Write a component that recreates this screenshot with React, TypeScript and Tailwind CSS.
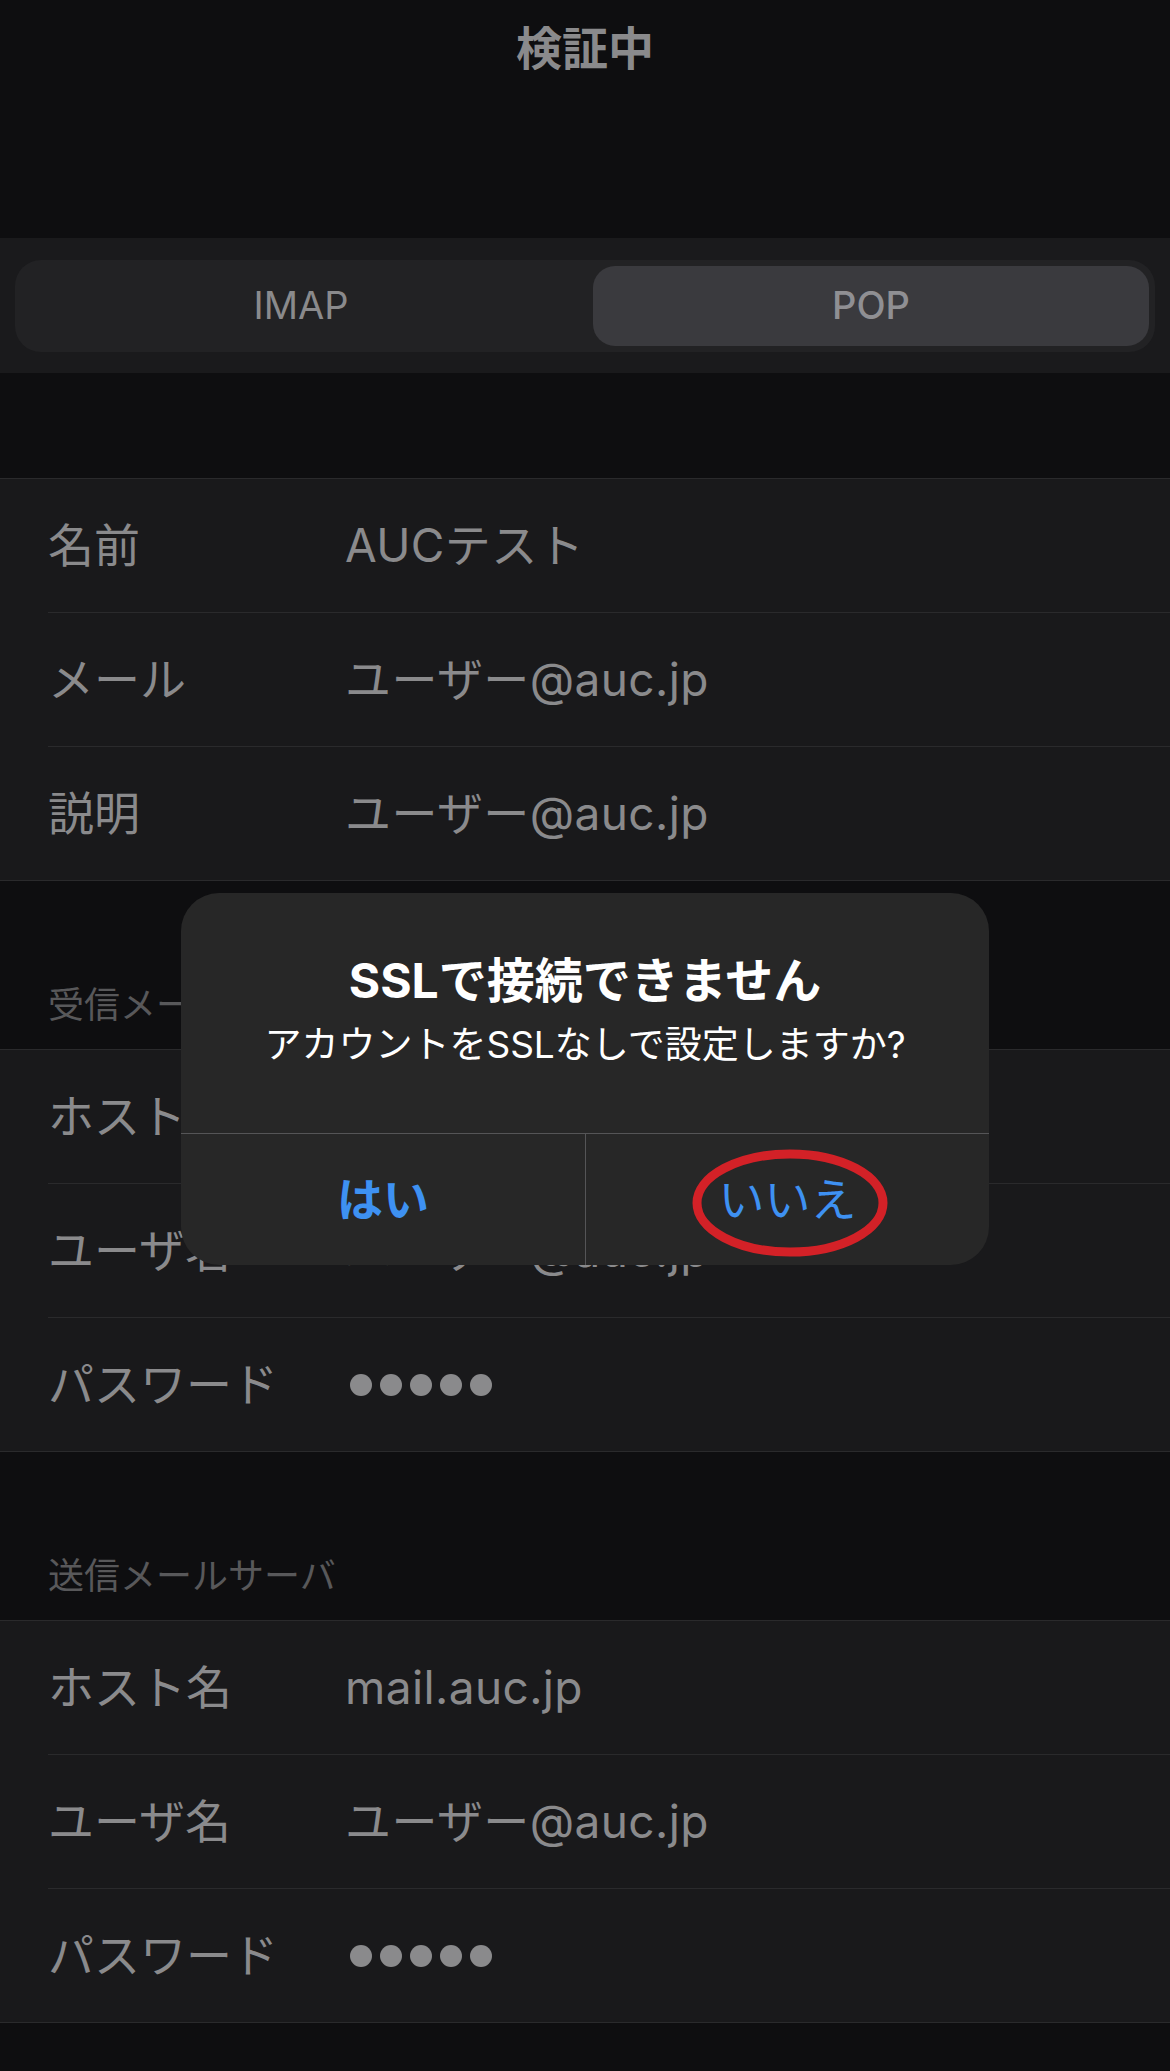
import React from "react";

type Field = { label: string; value: string };

const account: Field[] = [
  { label: "名前", value: "AUCテスト" },
  { label: "メール", value: "ユーザー@auc.jp" },
  { label: "説明", value: "ユーザー@auc.jp" },
];

const incoming: Field[] = [
  { label: "ホスト名", value: "mail.auc.jp" },
  { label: "ユーザ名", value: "ユーザー@auc.jp" },
  { label: "パスワード", value: "*****" },
];

const outgoing: Field[] = [
  { label: "ホスト名", value: "mail.auc.jp" },
  { label: "ユーザ名", value: "ユーザー@auc.jp" },
  { label: "パスワード", value: "*****" },
];

const Dots = () => (
  <div className="flex gap-[8px] ml-[5px]">
    {[0, 1, 2, 3, 4].map((i) => (
      <span key={i} className="block w-[22px] h-[22px] rounded-full bg-[#8a8a8c]" />
    ))}
  </div>
);

const Group = ({ fields }: { fields: Field[] }) => (
  <div className="bg-[#19191b] border-y border-[#2a2a2c]">
    {fields.map((f, i) => (
      <div key={f.label + i}>
        {i > 0 && <div className="ml-[48px] h-px bg-[#2a2a2c]" />}
        <div className="h-[133px] flex items-center pl-[48px] text-[46px] text-[#8a8a8c]">
          <div className="w-[297px] shrink-0">{f.label}</div>
          {f.value === "*****" ? <Dots /> : <div className="tracking-[0.4px]">{f.value}</div>}
        </div>
      </div>
    ))}
  </div>
);

const SectionHeader = ({ title }: { title?: string }) => (
  <div className="h-[168px] flex items-end pl-[48px] pb-[22px] text-[36px] leading-[44px] text-[#58585a]">
    {title}
  </div>
);

export default function App() {
  return (
    <div className="relative w-[1170px] h-[2071px] overflow-hidden bg-[#0e0e10] font-['Inter','Noto_Sans_CJK_JP',sans-serif]">
      {/* nav bar */}
      <div className="h-[238px] flex justify-center pt-[20px]">
        <h1 className="text-[46px] leading-[56px] font-bold text-[#8a8a8c]">検証中</h1>
      </div>

      {/* segmented control */}
      <div className="h-[135px] bg-[#1a1a1c] flex items-center px-[15px]">
        <div className="w-full h-[92px] rounded-[26px] bg-[#222224] p-[6px] grid grid-cols-[1fr_556px]">
          <div className="flex items-center justify-center pr-[12px] text-[38px] text-[#8a8a8c]">IMAP</div>
          <div className="flex items-center justify-center rounded-[22px] bg-[#3a3a3e] text-[38px] font-medium text-[#8f8f93]">
            POP
          </div>
        </div>
      </div>

      <div className="h-[105px]" />
      <Group fields={account} />
      <SectionHeader title="受信メールサーバ" />
      <Group fields={incoming} />
      <SectionHeader title="送信メールサーバ" />
      <Group fields={outgoing} />

      {/* alert */}
      <div className="absolute left-[181px] top-[893px] w-[808px] h-[372px] rounded-[38px] bg-[#272727] flex flex-col">
        <div className="h-[240px] flex flex-col items-center pt-[56px]">
          <div className="text-[48px] leading-[64px] font-bold text-white">SSLで接続できません</div>
          <div className="mt-[8px] text-[37px] leading-[48px] text-white">アカウントをSSLなしで設定しますか?</div>
        </div>
        <div className="h-px bg-[#555557]" />
        <div className="flex-1 grid grid-cols-2">
          <button className="flex items-center justify-center text-[46px] font-bold text-[#3e91f2]">はい</button>
          <button className="flex items-center justify-center border-l border-[#555557] text-[46px] text-[#3e91f2]">
            いいえ
          </button>
        </div>
      </div>

      {/* red annotation circle */}
      <svg className="absolute left-[690px] top-[1147px]" width="200" height="112" viewBox="0 0 200 112">
        <ellipse cx="100" cy="56" rx="93" ry="49" fill="none" stroke="#d32127" strokeWidth="9" />
      </svg>
    </div>
  );
}
